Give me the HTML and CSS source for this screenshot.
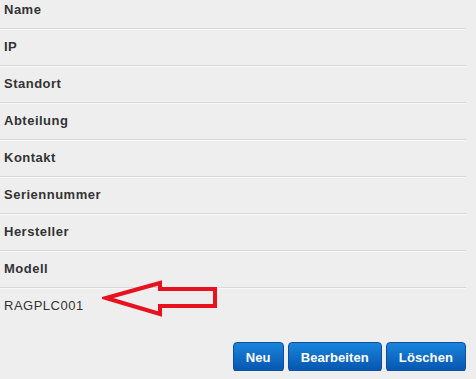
FILE: index.html
```html
<!DOCTYPE html>
<html lang="de">
<head>
  <meta charset="UTF-8">
  <meta name="viewport" content="width=device-width, initial-scale=1.0">
  <title>Geräte</title>
  <link rel="stylesheet" href="styles.css">
</head>
<body>
  <div class="page">
    <ul class="fields">
      <li class="field">Name</li>
      <li class="field">IP</li>
      <li class="field">Standort</li>
      <li class="field">Abteilung</li>
      <li class="field">Kontakt</li>
      <li class="field">Seriennummer</li>
      <li class="field">Hersteller</li>
      <li class="field">Modell</li>
      <li class="field value">RAGPLC001</li>
    </ul>

    <svg class="arrow" width="120" height="44" viewBox="0 0 120 44">
      <polygon points="4,19 58,4 58,10 113,10 113,27 58,27 58,35" fill="none" stroke="#e8121e" stroke-width="4" stroke-linejoin="miter"/>
    </svg>

    <div class="actions">
      <button type="button" class="btn">Neu</button>
      <button type="button" class="btn">Bearbeiten</button>
      <button type="button" class="btn">Löschen</button>
    </div>
  </div>
</body>
</html>
```

FILE: styles.css
```css
body {
  font-family: "Liberation Sans", Arial, sans-serif;
  background-color: #eeeeee;
  margin: 0;
  padding: 0;
  overflow: hidden;
}

.page {
  position: relative;
  width: 466px;
  height: 379px;
}

.fields {
  list-style: none;
  margin: -8px 0 0;
  padding: 0;
}

.field {
  height: 36px;
  line-height: 36px;
  padding-left: 4px;
  font-size: 13px;
  font-weight: bold;
  letter-spacing: 0.5px;
  color: #333;
  border-bottom: 1px solid #d8d8d8;
  box-shadow: 0 1px 0 #f8f8f8;
}

.field.value {
  font-weight: normal;
  border-bottom: none;
  box-shadow: none;
}

.arrow {
  position: absolute;
  left: 102px;
  top: 287px;
}

.actions {
  display: flex;
  justify-content: flex-end;
  gap: 4px;
  margin-top: 18px;
}

.btn {
  height: 30px;
  padding: 0 12px;
  border: 1px solid #0b4f9e;
  border-radius: 4px;
  background: linear-gradient(#1a84dc, #0655ae);
  color: #fff;
  font-family: "Liberation Sans", Arial, sans-serif;
  font-size: 13px;
  font-weight: bold;
  letter-spacing: 0.1px;
  cursor: pointer;
}
```
